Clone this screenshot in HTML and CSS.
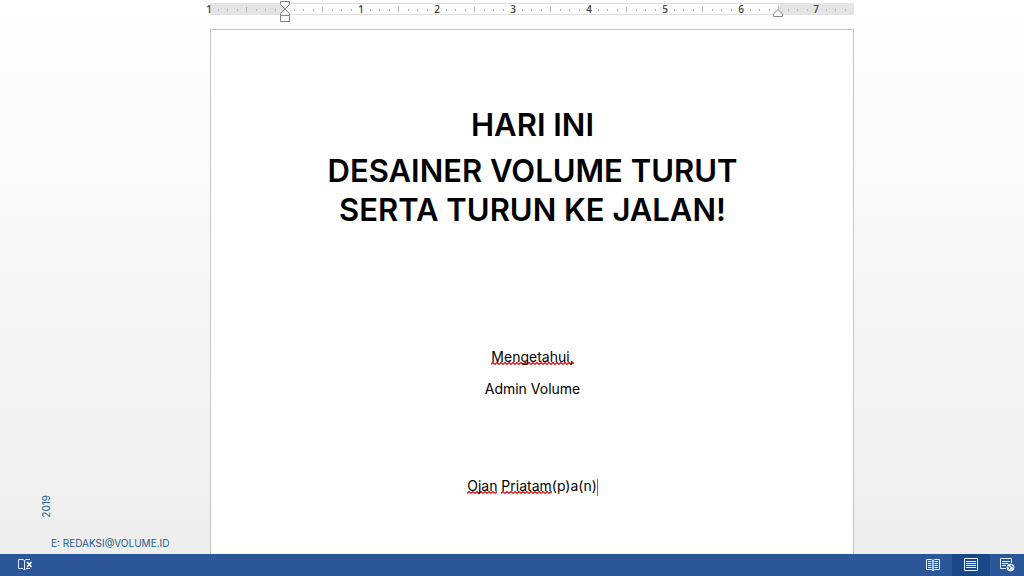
FILE: index.html
```html
<!DOCTYPE html>
<html lang="id">
<head>
<meta charset="UTF-8">
<meta name="viewport" content="width=device-width, initial-scale=1.0">
<title>Hari Ini</title>
<link rel="stylesheet" href="styles.css">
</head>
<body>

<div class="workspace">
    <aside class="credits">
        <span class="year">2019</span>
        <span class="email">E: REDAKSI@VOLUME.ID</span>
    </aside>

    <div class="document">
        <svg class="ruler" width="660" height="23" viewBox="-8 0 660 23">
            <defs>
                <!-- one inch: seven marks, the number takes the place of the eighth -->
                <pattern id="inch" x="75" y="0" width="76" height="23" patternUnits="userSpaceOnUse">
                    <path d="M9.5 9v2M18.5 9v2M28.5 9v2M47.5 9v2M56.5 9v2M66.5 9v2" stroke="#b8b8b8"/>
                    <path d="M37.5 7v5" stroke="#b0b0b0"/>
                </pattern>
            </defs>
            <rect x="0" y="3" width="644" height="12" fill="#ffffff"/>
            <path d="M75 3.5h493M75 14.5h493" stroke="#dcdcdc"/>
            <rect x="0" y="3" width="75" height="12" fill="#e4e4e4"/>
            <rect x="568" y="3" width="76" height="12" fill="#e4e4e4"/>
            <rect x="4" y="3" width="636" height="12" fill="url(#inch)"/>
            <g class="numbers">
                <text x="-1" y="13">1</text>
                <text x="151" y="13">1</text>
                <text x="227" y="13">2</text>
                <text x="303" y="13">3</text>
                <text x="379" y="13">4</text>
                <text x="455" y="13">5</text>
                <text x="531" y="13">6</text>
                <text x="606" y="13">7</text>
            </g>
            <g fill="#ffffff" stroke="#858585">
                <path d="M70.5 1.5h9v3l-4.5 4.5-4.5-4.5z"/>
                <path d="M75 9l4.5 4.5v2h-9v-2z"/>
                <path d="M70.5 15.5h9v6h-9z"/>
                <path d="M568 9.5l4.5 4.5v2.5h-9v-2.5z"/>
            </g>
        </svg>

        <main class="page">
            <h1>HARI INI</h1>
            <h1>DESAINER VOLUME TURUT<br>SERTA TURUN KE JALAN!</h1>
            <div class="signature">
                <p><span class="typo">Mengetahui,</span></p>
                <p>Admin Volume</p>
                <p class="name"><span class="typo">Ojan</span> <span class="typo">Priatam</span>(p)a(n)<span class="cursor"></span></p>
            </div>
        </main>
    </div>

    <div class="margin"></div>
</div>

<footer class="statusbar">
    <button type="button" class="proofing" aria-label="Proofing errors">
        <svg width="16" height="14" viewBox="0 0 16 14" fill="none" stroke="#dce6f5">
            <path d="M7.5 2.5L6 1.5H1.5v9H6l1.5 1.5 1.5-1.5h4M7.5 2.5v9.5M7.5 2.5L9 1.5h4"/>
            <path d="M10 4l4.5 5M14.5 4L10 9" stroke="#ffffff" stroke-width="1.6"/>
        </svg>
    </button>
    <div class="views">
        <button type="button" aria-label="Read mode">
            <svg width="14" height="14" viewBox="0 0 14 14" fill="none" stroke="#e8f0fb">
                <path d="M7 2.5L5.5 1.5h-5v10h5L7 13l1.5-1.5h5v-10h-5L7 2.5"/>
                <path d="M7 2v11" stroke-width="1.4"/>
                <path d="M2 3.5h3.500M2 5.500h3.500M2 7.500h3.500M2 9.500h3.500M8.500 3.500H12M8.500 5.500H12M8.500 7.500H12M8.500 9.500H12"/>
            </svg>
        </button>
        <button type="button" class="active" aria-label="Print layout">
            <svg width="14" height="14" viewBox="0 0 14 14" fill="none" stroke="#e8f0fb">
                <path d="M.5.5h13v12H.5zM2 3.5h10M2 5.5h10M2 7.5h10M2 9.5h10"/>
            </svg>
        </button>
        <button type="button" class="web" aria-label="Web layout">
            <svg width="15" height="14" viewBox="0 0 15 14" fill="none" stroke="#e8f0fb">
                <path d="M6 10.5H.5V.5h11V5M2 3.5h8M2 5.5h6M2 7.5h4"/>
                <circle cx="10.5" cy="9.5" r="3.5" fill="#e8f0fb"/>
                <path d="M7.5 8.5l2.5 1-1 2M11 6.5l.5 2 2 .5" stroke="#2b579a"/>
            </svg>
        </button>
    </div>
</footer>

</body>
</html>
```

FILE: styles.css
```css
* {
    box-sizing: border-box;
}
body {
    display: flex;
    flex-direction: column;
    min-height: 100vh;
    margin: 0;
    font-family: Inter, "Liberation Sans", sans-serif;
    color: #000;
    background: linear-gradient(#ffffff, #ededed);
}
.workspace {
    display: flex;
    flex: 1;
}
.credits {
    display: flex;
    flex: 1 1 210px;
    flex-direction: column;
    justify-content: flex-end;
    align-items: flex-start;
    gap: 18px;
    padding: 0 0 4px 39px;
    color: #1f5c8b;
    font-size: 10px;
    line-height: 14px;
}
.year {
    writing-mode: vertical-rl;
    transform: rotate(180deg);
}
.email {
    margin-left: 12px;
}
.document {
    display: flex;
    flex: none;
    flex-direction: column;
    width: 644px;
}
.margin {
    flex: 1 1 170px;
}
.ruler {
    display: block;
    margin: 0 -8px 6px;
}
.numbers {
    font-family: "Open Sans", sans-serif;
    font-size: 10px;
    font-weight: 600;
    fill: #444;
    text-anchor: middle;
}
.page {
    flex: 1;
    padding: 75px 71px 48px 72px;
    background: #fff;
    border: 1px solid #c6c6c6;
    border-bottom: none;
    text-align: center;
}
h1 {
    margin: 0 0 7px;
    font-size: 31px;
    font-weight: 600;
    line-height: 39px;
}
.signature {
    margin-top: 118px;
    font-size: 14px;
    line-height: 20px;
}
.signature p {
    margin: 0 0 12px;
}
.signature .name {
    margin: 77px 0 0;
}
.typo {
    background: url("data:image/svg+xml,%3Csvg xmlns='http://www.w3.org/2000/svg' width='4' height='3'%3E%3Cpath d='M0 2.5L2 .5l2 2' fill='none' stroke='%23e81123' stroke-width='1.4'/%3E%3C/svg%3E") repeat-x left bottom;
}
.cursor {
    display: inline-block;
    height: 17px;
    border-left: 1px solid #777;
    vertical-align: middle;
}
.statusbar {
    display: flex;
    justify-content: space-between;
    height: 22px;
    background: #2b579a;
}
.statusbar button {
    display: flex;
    align-items: center;
    justify-content: center;
    width: 38px;
    height: 22px;
    padding: 0;
    border: none;
    background: none;
}
.statusbar .proofing {
    margin-left: 6px;
}
.views {
    display: flex;
}
.statusbar .active {
    background: #1a4786;
}
.statusbar .web {
    width: 34px;
}
```
